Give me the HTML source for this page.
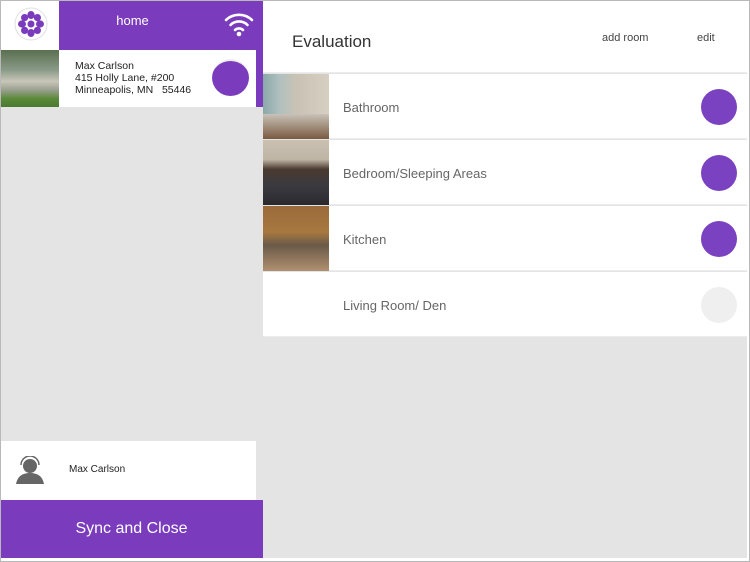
<!DOCTYPE html>
<html><head><style>
*{margin:0;padding:0;box-sizing:border-box}
body{width:750px;height:562px;position:relative;overflow:hidden;background:#fff;font-family:"Liberation Sans",sans-serif;}
.a{position:absolute}
.frame{left:0;top:0;width:750px;height:562px;border:1px solid #b9b9b9;}
.row{left:263px;width:484px;height:65px;background:#fff;border-bottom:1px solid #ececec}
.row .t{position:absolute;left:80px;top:26px;font-size:13px;color:#666}
.row .c{position:absolute;left:438px;top:15px;width:36px;height:36px;border-radius:50%;background:#7a41c0}
.row .img{position:absolute;left:0;top:0;width:66px;height:65px}
</style></head><body>
<div class="a" style="left:0;top:0;width:263px;height:558px;background:#e4e4e4"></div>
<div class="a" style="left:0;top:0;width:263px;height:50px;background:#7a3bbd"></div>
<div class="a" style="left:1px;top:1px;width:58px;height:49px;background:#fff"></div>
<svg class="a" style="left:14px;top:7px" width="34" height="34" viewBox="0 0 34 34">
<circle cx="17" cy="17" r="16" fill="#fff" stroke="#e0e0e0"/>
<g fill="#7a3bbd">
<circle cx="17" cy="17" r="3.5"/>
<ellipse cx="17" cy="8" rx="3.6" ry="4"/><ellipse cx="17" cy="26" rx="3.6" ry="4"/>
<ellipse cx="8" cy="17" rx="4" ry="3.6"/><ellipse cx="26" cy="17" rx="4" ry="3.6"/>
<ellipse cx="10.6" cy="10.6" rx="3.6" ry="3.6"/><ellipse cx="23.4" cy="10.6" rx="3.6" ry="3.6"/>
<ellipse cx="10.6" cy="23.4" rx="3.6" ry="3.6"/><ellipse cx="23.4" cy="23.4" rx="3.6" ry="3.6"/>
</g></svg>
<div class="a" style="left:60px;top:13px;width:145px;text-align:center;color:#fff;font-size:13px">home</div>
<svg class="a" style="left:224px;top:11px" width="30" height="26" viewBox="0 0 30 26">
<g fill="none" stroke="#fff" stroke-width="2.6" stroke-linecap="round">
<path d="M2 9 A19 19 0 0 1 28 9"/><path d="M6.5 14 A12 12 0 0 1 23.5 14"/><path d="M11 19 A6 6 0 0 1 19 19"/></g>
<circle cx="15" cy="23" r="2.3" fill="#fff"/></svg>
<div class="a" style="left:0;top:50px;width:263px;height:57px;background:#7a3bbd"></div>
<div class="a" style="left:0;top:50px;width:256px;height:57px;background:#fff"></div>
<div class="a" style="left:1px;top:50px;width:58px;height:57px;background:linear-gradient(#5a7050 0%,#8a9a88 35%,#c8c6b8 55%,#9aa090 70%,#5c8a3a 85%,#4a7a30 100%)"></div>
<div class="a" style="left:75px;top:60px;font-size:10.5px;line-height:12px;color:#222">Max Carlson<br>415 Holly Lane, #200<br>Minneapolis, MN&nbsp;&nbsp; 55446</div>
<div class="a" style="left:212px;top:59px;width:37px;height:37px;border-radius:50%;background:#7a3bbd;border-top:2px solid #eee"></div>
<div class="a" style="left:0;top:441px;width:256px;height:59px;background:#fff"></div>
<svg class="a" style="left:15px;top:456px" width="30" height="28" viewBox="0 0 30 28">
<circle cx="15" cy="10" r="7" fill="#666"/><path d="M6 9 A9 9 0 0 1 24 9" fill="none" stroke="#666" stroke-width="1.5"/>
<path d="M1 28 Q3 17 15 17 Q27 17 29 28Z" fill="#666"/></svg>
<div class="a" style="left:69px;top:464px;font-size:10px;color:#222">Max Carlson</div>
<div class="a" style="left:0;top:500px;width:263px;height:58px;background:#7a3bbd;color:#fff;font-size:16px;text-align:center;line-height:58px">Sync and Close</div>
<div class="a" style="left:263px;top:0;width:484px;height:558px;background:#e4e4e4"></div>
<div class="a" style="left:263px;top:1px;width:484px;height:72px;background:#fff;border-bottom:1px solid #ececec"></div>
<div class="a" style="left:292px;top:32px;font-size:17px;color:#333">Evaluation</div>
<div class="a" style="left:602px;top:32px;font-size:11px;color:#444">add room</div>
<div class="a" style="left:697px;top:32px;font-size:11px;color:#444">edit</div>
<div class="a row" style="top:74px"><div class="img" style="background:linear-gradient(90deg,#8aa8a8 0%,#b0c0c0 25%,#c9c2b4 50%,#d6cfc2 100%)"></div><div class="img" style="top:40px;height:25px;background:linear-gradient(#c8c2b8,#7a5a40)"></div><div class="t">Bathroom</div><div class="c"></div></div>
<div class="a row" style="top:140px"><div class="img" style="background:linear-gradient(#c9c0b2 0%,#bfb5a5 30%,#4a3a30 45%,#3a3a40 70%,#2a2a2e 100%)"></div><div class="t">Bedroom/Sleeping Areas</div><div class="c"></div></div>
<div class="a row" style="top:206px"><div class="img" style="background:linear-gradient(#9a6a3a 0%,#a87840 40%,#6a5a48 60%,#b09070 100%)"></div><div class="t">Kitchen</div><div class="c"></div></div>
<div class="a row" style="top:272px"><div class="t">Living Room/ Den</div><div class="c" style="background:#efefef"></div></div>
<div class="a frame"></div>
</body></html>
